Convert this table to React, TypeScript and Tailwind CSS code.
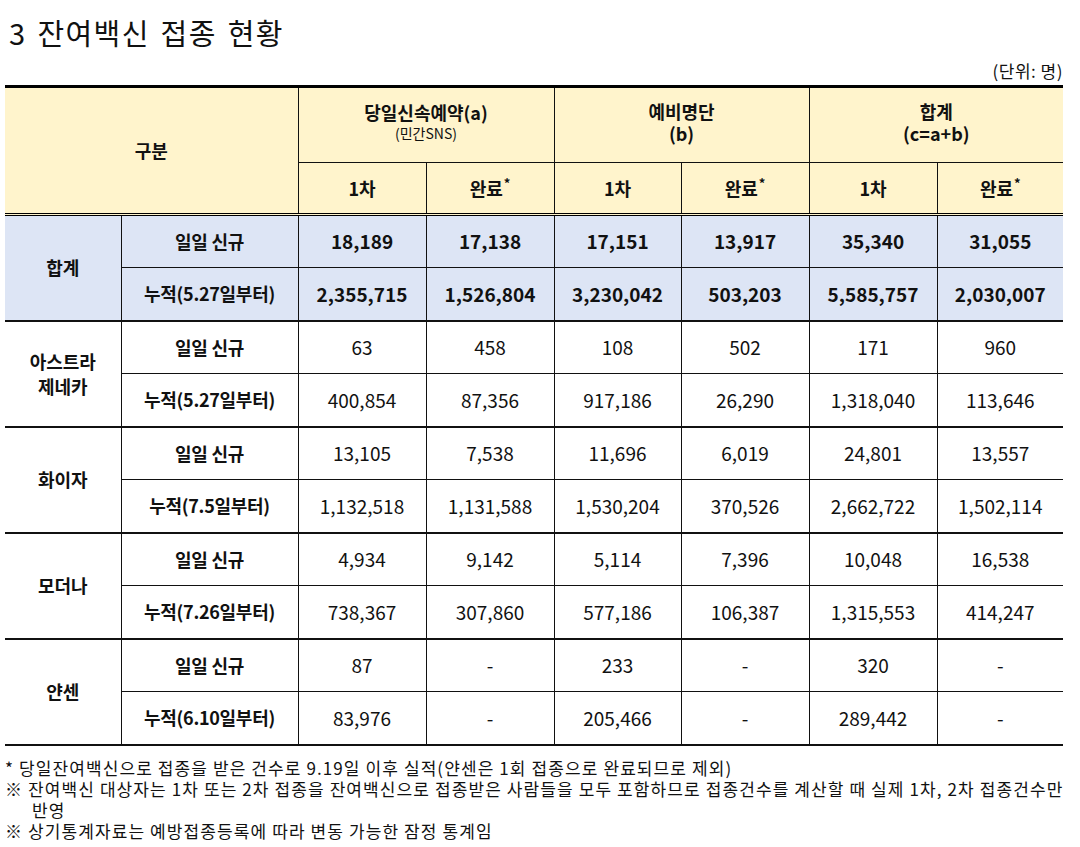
import React from "react";

const F = { fontFamily: '"Noto Sans CJK KR", "Noto Sans", sans-serif' };

type Group = { name: React.ReactNode; rows: { label: string; v: string[] }[]; bold?: boolean };

const groups: Group[] = [
  {
    name: "합계",
    bold: true,
    rows: [
      { label: "일일 신규", v: ["18,189", "17,138", "17,151", "13,917", "35,340", "31,055"] },
      { label: "누적(5.27일부터)", v: ["2,355,715", "1,526,804", "3,230,042", "503,203", "5,585,757", "2,030,007"] },
    ],
  },
  {
    name: (
      <>
        아스트라
        <br />
        제네카
      </>
    ),
    rows: [
      { label: "일일 신규", v: ["63", "458", "108", "502", "171", "960"] },
      { label: "누적(5.27일부터)", v: ["400,854", "87,356", "917,186", "26,290", "1,318,040", "113,646"] },
    ],
  },
  {
    name: "화이자",
    rows: [
      { label: "일일 신규", v: ["13,105", "7,538", "11,696", "6,019", "24,801", "13,557"] },
      { label: "누적(7.5일부터)", v: ["1,132,518", "1,131,588", "1,530,204", "370,526", "2,662,722", "1,502,114"] },
    ],
  },
  {
    name: "모더나",
    rows: [
      { label: "일일 신규", v: ["4,934", "9,142", "5,114", "7,396", "10,048", "16,538"] },
      { label: "누적(7.26일부터)", v: ["738,367", "307,860", "577,186", "106,387", "1,315,553", "414,247"] },
    ],
  },
  {
    name: "얀센",
    rows: [
      { label: "일일 신규", v: ["87", "-", "233", "-", "320", "-"] },
      { label: "누적(6.10일부터)", v: ["83,976", "-", "205,466", "-", "289,442", "-"] },
    ],
  },
];

function Done() {
  return (
    <span>
      완료<span className="text-[13px] relative -top-[8px] ml-[1px]">*</span>
    </span>
  );
}

export default function App() {
  return (
    <div className="w-[1080px] h-[847px] bg-white text-[#111] overflow-hidden" style={F}>
      <div className="pl-[9px] pt-[12px] text-[29px] leading-[40px] tracking-[1.4px] [word-spacing:3px]">3 잔여백신 접종 현황</div>
      <div className="flex justify-end pr-[17px] mt-[8px] text-[17px] leading-[22px] tracking-[0.5px]">(단위: 명)</div>
      <div className="pl-[5px] mt-[3px]">
        <table className="table-fixed border-collapse w-[1058px] text-center">
          <colgroup>
            <col className="w-[116px]" />
            <col className="w-[177px]" />
            <col className="w-[128px]" />
            <col className="w-[128px]" />
            <col className="w-[127px]" />
            <col className="w-[128px]" />
            <col className="w-[128px]" />
            <col className="w-[126px]" />
          </colgroup>
          <thead>
            <tr className="h-[76px] bg-[#fff4cc] border-t-[3px] border-black">
              <th colSpan={2} rowSpan={2} className="font-bold text-[18px] border-r border-[#111] border-b-[3px] border-b-black border-double">
                구분
              </th>
              <th colSpan={2} className="font-bold text-[18px] leading-[22px] border-r border-b border-[#111] pb-[6px]">
                <div>당일신속예약(a)</div>
                <div className="text-[14px] leading-[20px] font-normal">(민간SNS)</div>
              </th>
              <th colSpan={2} className="font-bold text-[18px] leading-[22px] border-r border-b border-[#111] pb-[6px]">
                <div>예비명단</div>
                <div>(b)</div>
              </th>
              <th colSpan={2} className="font-bold text-[18px] leading-[22px] border-b border-[#111] pb-[6px]">
                <div>합계</div>
                <div>(c=a+b)</div>
              </th>
            </tr>
            <tr className="h-[52px] bg-[#fff4cc] border-b-[3px] border-double border-black">
              <th className="font-bold text-[18px] border-r border-[#111]">1차</th>
              <th className="font-bold text-[18px] border-r border-[#111]">
                <Done />
              </th>
              <th className="font-bold text-[18px] border-r border-[#111]">1차</th>
              <th className="font-bold text-[18px] border-r border-[#111]">
                <Done />
              </th>
              <th className="font-bold text-[18px] border-r border-[#111]">1차</th>
              <th className="font-bold text-[18px]">
                <Done />
              </th>
            </tr>
          </thead>
          <tbody>
            {groups.map((g, gi) => (
              <React.Fragment key={gi}>
                {g.rows.map((r, ri) => (
                  <tr
                    key={ri}
                    className={
                      (g.bold ? "bg-[#dde5f5] " : "bg-white ") +
                      (ri === 1 ? "border-b-2 border-[#111] h-[53px]" : "border-b border-[#111] h-[53px]")
                    }
                  >
                    {ri === 0 && (
                      <td rowSpan={2} className="font-bold text-[18px] leading-[25px] border-r border-[#111]">
                        {g.name}
                      </td>
                    )}
                    <td className="font-bold text-[18px] border-r border-[#111] tracking-[-0.3px]">{r.label}</td>
                    {r.v.map((v, vi) => (
                      <td
                        key={vi}
                        className={
                          "text-[19px] " +
                          (g.bold ? "font-bold " : "font-normal ") +
                          (vi < 5 ? "border-r border-[#111]" : "")
                        }
                      >
                        {v}
                      </td>
                    ))}
                  </tr>
                ))}
              </React.Fragment>
            ))}
          </tbody>
        </table>
      </div>
      <div className="pl-[5px] mt-[11px] text-[17px] leading-[21px] tracking-[1.1px] whitespace-nowrap">
        <div>* 당일잔여백신으로 접종을 받은 건수로 9.19일 이후 실적(얀센은 1회 접종으로 완료되므로 제외)</div>
        <div className="pl-[27px] -indent-[27px]">
          ※ 잔여백신 대상자는 1차 또는 2차 접종을 잔여백신으로 접종받은 사람들을 모두 포함하므로 접종건수를 계산할 때 실제 1차, 2차 접종건수만
          <br />
          반영
        </div>
        <div>※ 상기통계자료는 예방접종등록에 따라 변동 가능한 잠정 통계임</div>
      </div>
    </div>
  );
}
